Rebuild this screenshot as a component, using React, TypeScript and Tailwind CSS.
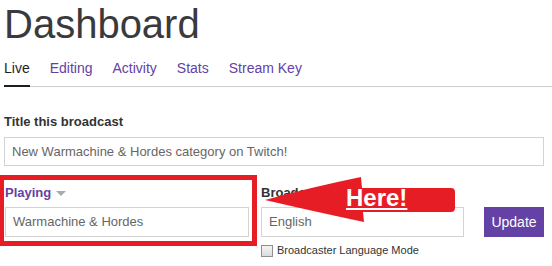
import React from 'react';

const tabs = ['Live', 'Editing', 'Activity', 'Stats', 'Stream Key'];

function HereArrow() {
  return (
    <svg
      className="pointer-events-none absolute left-0 top-0"
      width={552}
      height={266}
      viewBox="0 0 552 266"
    >
      <path
        d="M265 200 Q312 187 361 177 L362 188 L451 188 Q455 188 455 192 L455 208 Q455 212 451 212 L363 212 L364 222 Q312 211 265 200 Z"
        fill="#e71d25"
      />
    </svg>
  );
}

function App() {
  return (
    <div className="relative h-[266px] w-[552px] overflow-hidden bg-white pl-[4px] font-['Liberation_Sans',Arial,sans-serif] text-[#333]">
      <h1 className="mt-[4px] text-[40px] leading-none text-[#3a3a3d]">Dashboard</h1>

      <div className="mt-[14px] flex gap-[20px] border-b border-[#cccccc] text-[14px] leading-[20px]">
        {tabs.map((t, i) => (
          <div
            key={t}
            className={
              i === 0
                ? '-mb-px border-b-2 border-[#1e1e1e] pb-[7px] text-[#1e1e1e]'
                : '-mb-px border-b-2 border-transparent pb-[7px] text-[#6441a5]'
            }
          >
            {t}
          </div>
        ))}
      </div>

      <div className="mt-[27px] text-[13px] font-bold leading-[16px] text-[#333]">Title this broadcast</div>
      <div className="mt-[7px] flex h-[29px] w-[540px] items-center border border-[#d3d3d3] pl-[7px] text-[13px] text-[#666]">
        New Warmachine &amp; Hordes category on Twitch!
      </div>

      <div className="mt-[19px] flex items-start">
        <div className="ml-[1px] w-[244px]">
          <div className="flex h-[16px] items-center gap-[5px] text-[13px] font-bold leading-[16px] text-[#6441a5]">
            Playing
            <span className="mt-[1px] h-0 w-0 border-x-[5px] border-t-[5px] border-x-transparent border-t-[#aaaaaa]" />
          </div>
          <div className="mt-[6px] flex h-[30px] items-center border border-[#d3d3d3] pl-[7px] text-[13px] text-[#666]">
            Warmachine &amp; Hordes
          </div>
        </div>

        <div className="ml-[12px] w-[203px]">
          <div className="text-[13px] font-bold leading-[16px] text-[#333]">Broadcaster Language</div>
          <div className="mt-[6px] flex h-[30px] items-center border border-[#d3d3d3] pl-[7px] text-[13px] text-[#666]">
            English
          </div>
          <label className="mt-[7px] flex items-center gap-[4px] text-[11px] leading-[13px] text-[#333]">
            <span className="h-[12px] w-[12px] border border-[#8f8f8f] bg-gradient-to-b from-[#f4f4f4] to-[#dcdcdc]" />
            Broadcaster Language Mode
          </label>
        </div>

        <button className="ml-[20px] mt-[22px] h-[30px] w-[60px] bg-[#6441a5] text-[14px] text-white">
          Update
        </button>
      </div>

      <div className="pointer-events-none absolute left-[-1px] top-[175px] h-[71px] w-[258px] border-[5px] border-[#e71d25]" />
      <HereArrow />
      <div className="pointer-events-none absolute left-[346px] top-[184px] text-[24px] font-bold leading-[28px] text-white underline decoration-[2px] underline-offset-[2px]">
        Here!
      </div>
    </div>
  );
}

export default App;
